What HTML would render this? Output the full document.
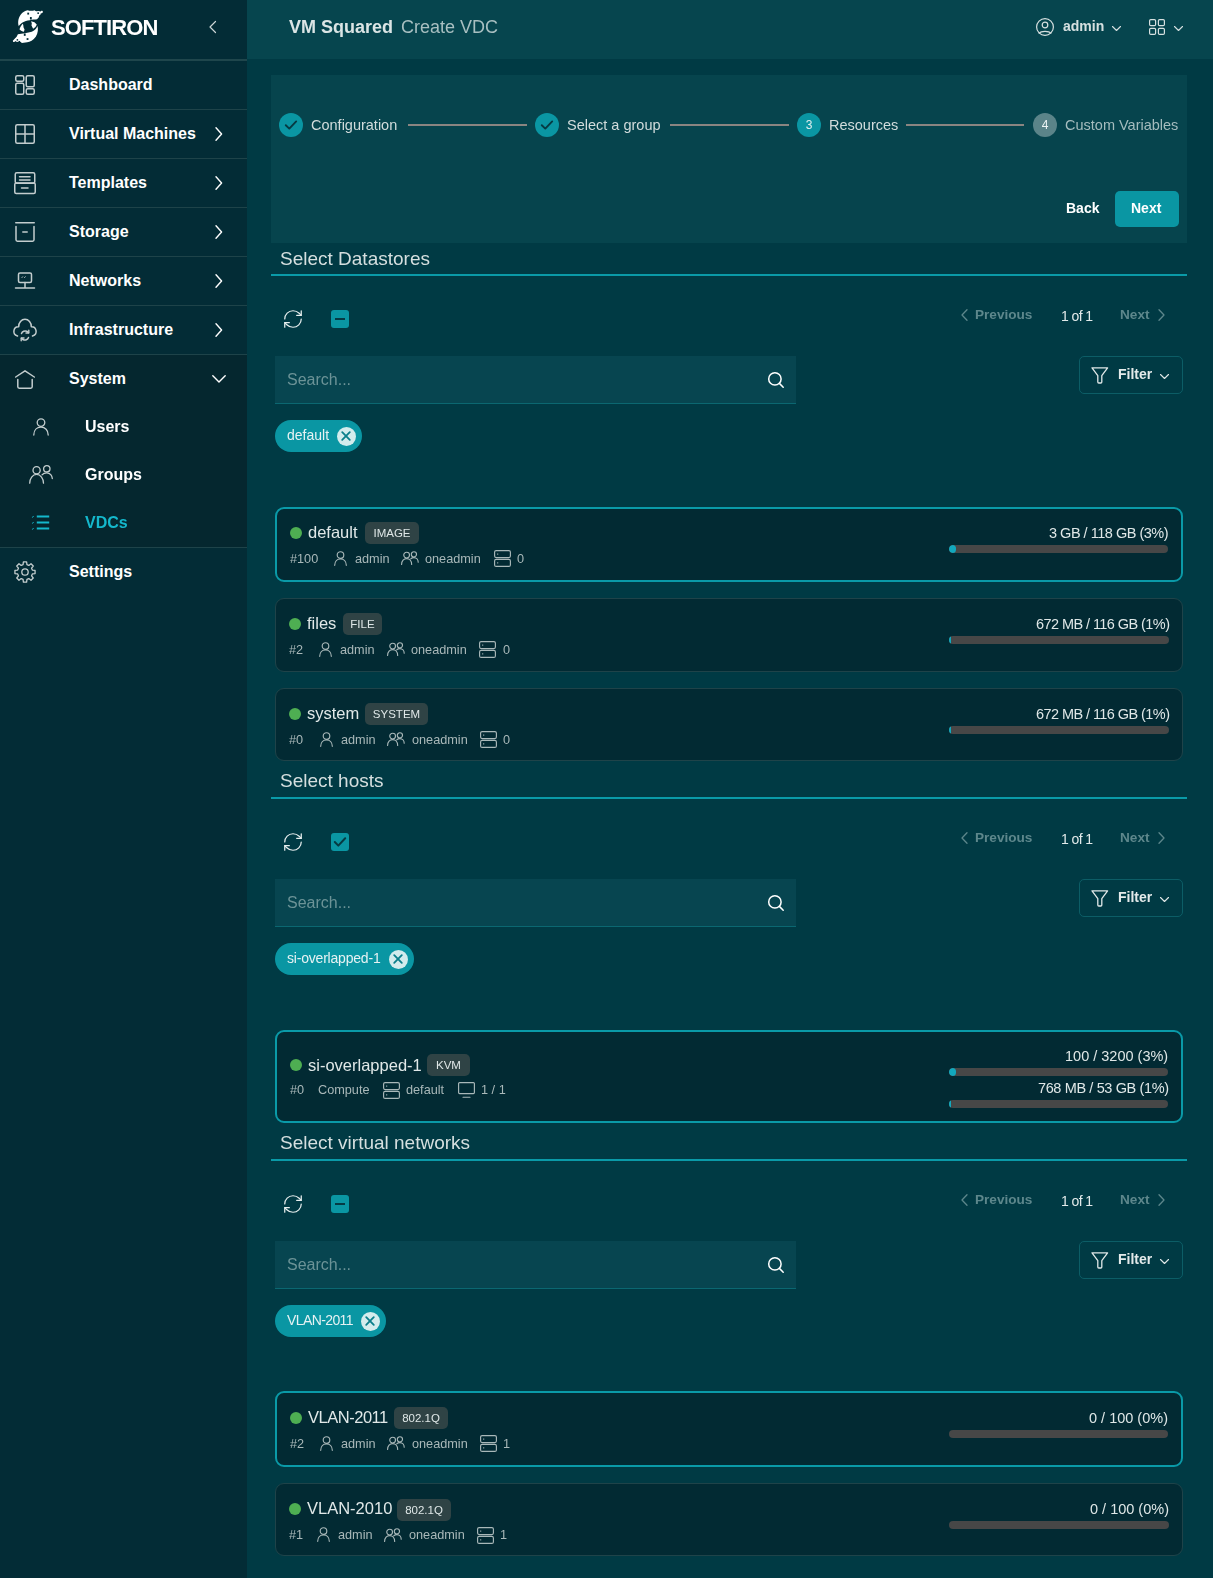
<!DOCTYPE html>
<html><head><meta charset="utf-8"><style>
*{box-sizing:border-box;margin:0;padding:0}
html,body{width:1213px;height:1578px;overflow:hidden;background:#003a44;font-family:"Liberation Sans",sans-serif;}
.a{position:absolute}
svg{position:absolute;overflow:visible}
#side{position:absolute;left:0;top:0;width:247px;height:1578px;background:#032c36}
.mi{position:absolute;left:0;width:247px;height:49px;border-bottom:1px solid #1e4349;color:#fff;font-weight:700;font-size:16px}
.mi .t{position:absolute;left:69px;top:15px;line-height:18px;white-space:nowrap}
#grp{position:absolute;left:0;top:355px;width:247px;height:193px;background:#05272f;border-bottom:1px solid #1e4349}
#hdr{position:absolute;left:247px;top:0;width:966px;height:59px;background:#06454e}
#main{position:absolute;left:247px;top:59px;width:966px;height:1519px;background:#003a44}
.txt{position:absolute;white-space:nowrap;will-change:transform}
</style></head><body>
<div id="side">
<div class="a" style="left:0;top:59px;width:247px;height:2px;background:#1f464c"></div>
<svg style="left:8px;top:5px" width="40" height="43" viewBox="0 0 1213 1304" fill="none" stroke="#c3cdce" stroke-width="1.5" stroke-linecap="round" stroke-linejoin="round"><g fill="#fff" stroke="none">
<path d="M600 160 L640 172 L760 176 L800 160 L850 192 L1040 178 L1065 215 L990 290 L950 320 L930 380 L880 432 C760 442 560 462 440 532 C380 572 342 610 330 645 C296 560 298 420 378 300 C440 220 520 176 600 160 Z"/>
<path d="M892 640 C922 720 912 860 842 960 C772 1060 662 1122 582 1132 L420 1150 L380 1112 L160 1122 L145 1082 L262 962 L300 890 C420 870 600 852 720 812 C800 782 862 722 892 640 Z"/>
<path d="M440 572 C400 622 352 700 350 742 C382 782 440 802 482 812 L502 742 L472 682 L462 602 Z"/>
<path d="M700 492 L722 562 L712 622 L762 722 C802 702 852 652 872 592 L802 522 Z"/>
</g>
<g fill="#032c36" stroke="none"><rect x="585" y="232" width="55" height="58"/><rect x="665" y="365" width="55" height="75"/><rect x="890" y="225" width="50" height="45"/><rect x="480" y="865" width="55" height="70"/><rect x="565" y="1005" width="55" height="55"/><rect x="262" y="1035" width="45" height="45"/><rect x="955" y="150" width="45" height="45"/><rect x="990" y="255" width="40" height="40"/><rect x="205" y="1100" width="45" height="40"/><rect x="320" y="1090" width="45" height="40"/></g></svg>
<div class="txt" style="left:50.5px;top:14.7px;font-size:22px;line-height:26px;color:#ffffff;font-weight:700;letter-spacing:-0.9px">SOFTIRON</div>
<svg style="left:209px;top:21px" width="8" height="12" viewBox="0 0 8 12" fill="none" stroke="#cdd6d6" stroke-width="1.2" stroke-linecap="round" stroke-linejoin="round"><path d="M6.5 0.5 L1 6 L6.5 11.5"/></svg>
<div class="mi" style="top:61px"><div class="t">Dashboard</div></div>
<div class="mi" style="top:110px"><div class="t">Virtual Machines</div></div>
<svg style="left:215px;top:127px" width="8" height="14" viewBox="0 0 8 14" fill="none" stroke="#ffffff" stroke-width="1.4" stroke-linecap="round" stroke-linejoin="round"><path d="M1 0.8 L6.6 7 L1 13.2"/></svg>
<div class="mi" style="top:159px"><div class="t">Templates</div></div>
<svg style="left:215px;top:176px" width="8" height="14" viewBox="0 0 8 14" fill="none" stroke="#ffffff" stroke-width="1.4" stroke-linecap="round" stroke-linejoin="round"><path d="M1 0.8 L6.6 7 L1 13.2"/></svg>
<div class="mi" style="top:208px"><div class="t">Storage</div></div>
<svg style="left:215px;top:225px" width="8" height="14" viewBox="0 0 8 14" fill="none" stroke="#ffffff" stroke-width="1.4" stroke-linecap="round" stroke-linejoin="round"><path d="M1 0.8 L6.6 7 L1 13.2"/></svg>
<div class="mi" style="top:257px"><div class="t">Networks</div></div>
<svg style="left:215px;top:274px" width="8" height="14" viewBox="0 0 8 14" fill="none" stroke="#ffffff" stroke-width="1.4" stroke-linecap="round" stroke-linejoin="round"><path d="M1 0.8 L6.6 7 L1 13.2"/></svg>
<div class="mi" style="top:306px"><div class="t">Infrastructure</div></div>
<svg style="left:215px;top:323px" width="8" height="14" viewBox="0 0 8 14" fill="none" stroke="#ffffff" stroke-width="1.4" stroke-linecap="round" stroke-linejoin="round"><path d="M1 0.8 L6.6 7 L1 13.2"/></svg>
<svg style="left:15px;top:75px" width="20" height="20" viewBox="0 0 20 20" fill="none" stroke="#c3cdce" stroke-width="1.5" stroke-linecap="round" stroke-linejoin="round"><rect x="0.75" y="0.75" width="8" height="5.5" rx="1.5"/><rect x="0.75" y="8.25" width="8" height="11" rx="1.5"/><rect x="11.25" y="0.75" width="8" height="11" rx="1.5"/><rect x="11.25" y="13.75" width="8" height="5.5" rx="1.5"/></svg>
<svg style="left:15px;top:124px" width="20" height="20" viewBox="0 0 20 20" fill="none" stroke="#c3cdce" stroke-width="1.5" stroke-linecap="round" stroke-linejoin="round"><rect x="0.75" y="0.75" width="18.5" height="18.5" rx="1.5"/><path d="M10 0.75 V19.25 M0.75 10 H19.25"/></svg>
<svg style="left:14px;top:172px" width="22" height="22" viewBox="0 0 22 22" fill="none" stroke="#c3cdce" stroke-width="1.5" stroke-linecap="round" stroke-linejoin="round"><rect x="1.25" y="0.75" width="19.5" height="10.5" rx="1.5"/><rect x="0.75" y="11" width="20.5" height="10.5" rx="1.5"/><path d="M5.5 4.8 H16 M5.5 8 H16 M7.5 16 H14"/></svg>
<svg style="left:15px;top:222px" width="20" height="20" viewBox="0 0 20 20" fill="none" stroke="#c3cdce" stroke-width="1.5" stroke-linecap="round" stroke-linejoin="round"><path d="M0.75 0.75 H19.25 M1 4.5 V17.8 Q1 19.2 2.4 19.2 H17.6 Q19 19.2 19 17.8 V4.5 M7.8 10 H12.2"/></svg>
<svg style="left:15px;top:272px" width="20" height="17" viewBox="0 0 20 17" fill="none" stroke="#c3cdce" stroke-width="1.5" stroke-linecap="round" stroke-linejoin="round"><rect x="3.5" y="1" width="13" height="9.5" rx="1.5"/><path d="M10 10.5 V15.5 M0.5 16 H19.5"/><path d="M7 5.5 L7.6 4.8 M9.6 5.5 L10.2 4.8" stroke-width="1"/></svg>
<svg style="left:13px;top:318px" width="24" height="24" viewBox="0 0 24 24" fill="none" stroke="#c3cdce" stroke-width="1.5" stroke-linecap="round" stroke-linejoin="round"><path d="M4.5 18 C1.5 17 0.5 14.5 1 12.3 C1.5 10 3.5 8.5 5.7 8.7 C5.5 4.5 8.5 1.3 12 1.3 C15.5 1.3 18.5 4.5 18.3 8.7 C20.5 8.5 22.5 10 23 12.3 C23.5 14.5 22.5 17 19.5 18"/><path d="M8.5 15.5 C9.3 13.3 11.7 12.4 13.7 13.2 L15.5 14.6 M15.5 19.5 C14.7 21.7 12.3 22.6 10.3 21.8 L8.5 20.4" stroke-width="1.5"/><path d="M15.8 12.2 V15 H13" stroke-width="1.4"/><path d="M8.2 22.8 V20 H11" stroke-width="1.4"/></svg>
<div id="grp"></div>
<div class="mi" style="top:355px;border-bottom:none"><div class="t">System</div></div>
<svg style="left:212px;top:375px" width="14" height="8" viewBox="0 0 14 8" fill="none" stroke="#ffffff" stroke-width="1.4" stroke-linecap="round" stroke-linejoin="round"><path d="M0.8 0.8 L7 7 L13.2 0.8"/></svg>
<svg style="left:15px;top:370px" width="20" height="19" viewBox="0 0 20 19" fill="none" stroke="#c3cdce" stroke-width="1.5" stroke-linecap="round" stroke-linejoin="round"><path d="M0.7 7 L10 0.8 L19.3 7"/><path d="M2.8 9.5 V16.8 Q2.8 18.2 4.2 18.2 H15.8 Q17.2 18.2 17.2 16.8 V9.5"/></svg>
<div class="txt" style="left:85px;top:418px;font-size:16px;line-height:18px;color:#fff;font-weight:700;">Users</div>
<div class="txt" style="left:85px;top:466px;font-size:16px;line-height:18px;color:#fff;font-weight:700;">Groups</div>
<div class="txt" style="left:85px;top:514px;font-size:16px;line-height:18px;color:#14b8cc;font-weight:700;">VDCs</div>
<svg style="left:33px;top:418px" width="16" height="18" viewBox="0 0 16 18" fill="none" stroke="#c3cdce" stroke-width="1.3" stroke-linecap="round" stroke-linejoin="round"><circle cx="8" cy="4.6" r="3.8"/><path d="M0.8 17 C0.8 12 4 9.2 8 9.2 C12 9.2 15.2 12 15.2 17"/></svg>
<svg style="left:29px;top:464px" width="24" height="20" viewBox="0 0 24 20" fill="none" stroke="#c3cdce" stroke-width="1.3" stroke-linecap="round" stroke-linejoin="round"><circle cx="7.6" cy="6.2" r="3.6"/><path d="M0.7 19.2 C0.7 14.5 3.6 10.4 7.6 10.4 C11.6 10.4 14.5 14.5 14.5 19.2"/><circle cx="17.8" cy="4.8" r="3.2"/><path d="M13 10.8 C14 9.6 15.8 8.8 17.8 8.8 C21 8.8 23.3 11.8 23.3 14.6"/></svg>
<svg style="left:32px;top:515px" width="18" height="16" viewBox="0 0 18 16" fill="none" stroke="#14b8cc" stroke-width="1.5" stroke-linecap="round" stroke-linejoin="round"><path d="M4.8 1.5 H17.2 M4.8 7.5 H17.2 M4.8 13.5 H17.2" stroke-width="2.2" stroke-linecap="butt"/><path d="M0.6 2.3 L1.3 1.3 M0.6 8.3 L1.3 7.3 M0.6 14.3 L1.3 13.3" stroke-width="1"/></svg>
<div class="mi" style="top:548px;border-bottom:none"><div class="t">Settings</div></div>
<svg style="left:14px;top:561px" width="22" height="22" viewBox="0 0 22 22" fill="none" stroke="#c3cdce" stroke-width="1.3" stroke-linecap="round" stroke-linejoin="round"><path d="M18.35 9.05 L21.07 9.40 L21.07 12.60 L18.35 12.95 L17.57 14.82 L19.25 17.00 L17.00 19.25 L14.82 17.57 L12.95 18.35 L12.60 21.07 L9.40 21.07 L9.05 18.35 L7.18 17.57 L5.00 19.25 L2.75 17.00 L4.43 14.82 L3.65 12.95 L0.93 12.60 L0.93 9.40 L3.65 9.05 L4.43 7.18 L2.75 5.00 L5.00 2.75 L7.18 4.43 L9.05 3.65 L9.40 0.93 L12.60 0.93 L12.95 3.65 L14.82 4.43 L17.00 2.75 L19.25 5.00 L17.57 7.18 Z"/><circle cx="11" cy="11" r="3.2"/></svg>
</div>
<div id="hdr">
<div class="txt" style="left:42px;top:16px;font-size:18px;line-height:22px;color:#dbe5e5;font-weight:700;">VM Squared</div>
<div class="txt" style="left:154px;top:16px;font-size:18px;line-height:22px;color:#a8bfc1;font-weight:400;">Create VDC</div>
<svg style="left:789px;top:18px" width="18" height="18" viewBox="0 0 18 18" fill="none" stroke="#d6e0e0" stroke-width="1.2" stroke-linecap="round" stroke-linejoin="round"><circle cx="9" cy="9" r="8.4"/><circle cx="9" cy="7" r="2.8"/><path d="M3.2 15.2 C5 12.8 13 12.8 14.8 15.2"/></svg>
<div class="txt" style="left:816px;top:17px;font-size:14px;line-height:18px;color:#d6e0e0;font-weight:700;">admin</div>
<svg style="left:865px;top:26px" width="9" height="5" viewBox="0 0 9 5" fill="none" stroke="#d6e0e0" stroke-width="1.1" stroke-linecap="round" stroke-linejoin="round"><path d="M0.5 0.5 L4.5 4.5 L8.5 0.5"/></svg>
<svg style="left:902px;top:19px" width="16" height="16" viewBox="0 0 16 16" fill="none" stroke="#d6e0e0" stroke-width="1.2" stroke-linecap="round" stroke-linejoin="round"><rect x="0.6" y="0.6" width="6" height="6" rx="1.2"/><rect x="9.4" y="0.6" width="6" height="6" rx="1.2"/><rect x="0.6" y="9.4" width="6" height="6" rx="1.2"/><rect x="9.4" y="9.4" width="6" height="6" rx="1.2"/></svg>
<svg style="left:927px;top:26px" width="9" height="5" viewBox="0 0 9 5" fill="none" stroke="#d6e0e0" stroke-width="1.1" stroke-linecap="round" stroke-linejoin="round"><path d="M0.5 0.5 L4.5 4.5 L8.5 0.5"/></svg>
</div>
<div id="main"></div>
<div class="a" style="left:271px;top:75px;width:916px;height:168px;background:#06444d"></div>
<div class="a" style="left:279px;top:113px;width:24px;height:24px;border-radius:50%;background:#0a96a3"></div>
<svg style="left:285px;top:120px" width="12" height="10" viewBox="0 0 12 10" fill="none" stroke="#063a42" stroke-width="1.9" stroke-linecap="round" stroke-linejoin="round"><path d="M0.8 5.2 L4.3 8.6 L11.2 1.4"/></svg>
<div class="txt" style="left:311px;top:117.73px;font-size:14.5px;line-height:14.5px;color:#d2dcdc;font-weight:400;">Configuration</div>
<div class="a" style="left:408px;top:124px;width:119px;height:2px;background:#8a8581"></div>
<div class="a" style="left:535px;top:113px;width:24px;height:24px;border-radius:50%;background:#0a96a3"></div>
<svg style="left:541px;top:120px" width="12" height="10" viewBox="0 0 12 10" fill="none" stroke="#063a42" stroke-width="1.9" stroke-linecap="round" stroke-linejoin="round"><path d="M0.8 5.2 L4.3 8.6 L11.2 1.4"/></svg>
<div class="txt" style="left:567px;top:117.73px;font-size:14.5px;line-height:14.5px;color:#d2dcdc;font-weight:400;">Select a group</div>
<div class="a" style="left:670px;top:124px;width:119px;height:2px;background:#8a8581"></div>
<div class="a" style="left:797px;top:113px;width:24px;height:24px;border-radius:50%;background:#0a96a3"></div>
<div class="txt" style="left:797px;top:118px;width:24px;text-align:center;font-size:12px;line-height:14px;color:#dfeeee">3</div>
<div class="txt" style="left:829px;top:117.73px;font-size:14.5px;line-height:14.5px;color:#d2dcdc;font-weight:400;">Resources</div>
<div class="a" style="left:906px;top:124px;width:118px;height:2px;background:#8a8581"></div>
<div class="a" style="left:1033px;top:113px;width:24px;height:24px;border-radius:50%;background:#5b8489"></div>
<div class="txt" style="left:1033px;top:118px;width:24px;text-align:center;font-size:12px;line-height:14px;color:#eef5f5">4</div>
<div class="txt" style="left:1065px;top:117.73px;font-size:14.5px;line-height:14.5px;color:#a5bcbe;font-weight:400;">Custom Variables</div>
<div class="txt" style="left:1066px;top:201.15px;font-size:14px;line-height:14px;color:#ffffff;font-weight:700;">Back</div>
<div class="a" style="left:1115px;top:191px;width:64px;height:36px;border-radius:5px;background:#0a96a3"></div>
<div class="txt" style="left:1131px;top:201.15px;font-size:14px;line-height:14px;color:#ffffff;font-weight:700;">Next</div>
<div class="txt" style="left:280px;top:249.12px;font-size:19px;line-height:19px;color:#d5dfdf;font-weight:400;">Select Datastores</div>
<div class="a" style="left:271px;top:274px;width:916px;height:2px;background:#0a9aa8"></div>
<svg style="left:282px;top:308px" width="22" height="22" viewBox="0 0 24 24" fill="none" stroke="#e6eeee" stroke-width="1.35" stroke-linecap="round" stroke-linejoin="round"><path d="M3 12a9 9 0 0 1 9-9 9.75 9.75 0 0 1 6.74 2.74L21 8"/><path d="M21 3v5h-5"/><path d="M21 12a9 9 0 0 1-9 9 9.75 9.75 0 0 1-6.74-2.74L3 16"/><path d="M8 16H3v5"/></svg>
<div class="a" style="left:331px;top:310px;width:18px;height:18px;border-radius:3px;background:#0a96a3"></div>
<div class="a" style="left:335px;top:318px;width:10px;height:2px;background:#053a44"></div>
<svg style="left:961px;top:309px" width="7" height="12" viewBox="0 0 7 12" fill="none" stroke="#5d878c" stroke-width="1.3" stroke-linecap="round" stroke-linejoin="round"><path d="M6 0.8 L1 6 L6 11.2"/></svg>
<div class="txt" style="left:975px;top:308.49px;font-size:13.6px;line-height:13.6px;color:#5d878c;font-weight:700;">Previous</div>
<div class="txt" style="left:1060.5px;top:308.65px;font-size:14px;line-height:14px;color:#e2eaea;font-weight:400;letter-spacing:-0.6px">1 of 1</div>
<div class="txt" style="left:1120px;top:308.49px;font-size:13.6px;line-height:13.6px;color:#5d878c;font-weight:700;">Next</div>
<svg style="left:1158px;top:309px" width="7" height="12" viewBox="0 0 7 12" fill="none" stroke="#5d878c" stroke-width="1.3" stroke-linecap="round" stroke-linejoin="round"><path d="M1 0.8 L6 6 L1 11.2"/></svg>
<div class="a" style="left:275px;top:356px;width:521px;height:48px;background:#074550;border-bottom:1px solid #0b6771"></div>
<div class="txt" style="left:287px;top:371.96px;font-size:16px;line-height:16px;color:#6c9397;font-weight:400;">Search...</div>
<svg style="left:768px;top:372px" width="17" height="17" viewBox="0 0 17 17" fill="none" stroke="#ffffff" stroke-width="1.5" stroke-linecap="round" stroke-linejoin="round"><circle cx="6.9" cy="6.9" r="6.2"/><path d="M11.4 11.4 L15.2 15.2"/></svg>
<div class="a" style="left:1079px;top:356px;width:104px;height:38px;border:1px solid #0c5d66;border-radius:5px"></div>
<svg style="left:1091px;top:367px" width="18" height="17" viewBox="0 0 18 17" fill="none" stroke="#e0e8e8" stroke-width="1.3" stroke-linecap="round" stroke-linejoin="round"><path d="M1 0.8 H16.6 L10.8 8.6 V15 Q10.8 16 9.8 16 H7.8 Q6.8 16 6.8 15 V8.6 Z"/></svg>
<div class="txt" style="left:1118px;top:366.65px;font-size:14px;line-height:14px;color:#e3eaea;font-weight:700;">Filter</div>
<svg style="left:1160px;top:374px" width="9" height="5" viewBox="0 0 9 5" fill="none" stroke="#e0e8e8" stroke-width="1.1" stroke-linecap="round" stroke-linejoin="round"><path d="M0.5 0.5 L4.5 4.5 L8.5 0.5"/></svg>
<div class="a" style="left:275px;top:420px;width:87px;height:32px;border-radius:16px;background:#0a96a3"></div>
<div class="txt" style="left:287px;top:428.15px;font-size:14px;line-height:14px;color:#e6f2f3;font-weight:400;letter-spacing:0px">default</div>
<div class="a" style="left:336.5px;top:426.5px;width:19px;height:19px;border-radius:50%;background:#d3eced"></div>
<svg style="left:341px;top:431px" width="10" height="10" viewBox="0 0 10 10" fill="none" stroke="#0a7f8b" stroke-width="1.8" stroke-linecap="round" stroke-linejoin="round"><path d="M1.2 1.2 L8.8 8.8 M8.8 1.2 L1.2 8.8"/></svg>
<div class="a" style="left:275px;top:507px;width:908px;height:75px;border:2px solid #0a9aa8;border-radius:9px;background:#022a33"></div>
<div class="a" style="left:290px;top:527px;width:12px;height:12px;border-radius:50%;background:#4eae52"></div>
<div class="txt" style="left:308px;top:524.03px;font-size:16.5px;line-height:16.5px;color:#e0e8e8;font-weight:400;letter-spacing:0px">default</div>
<div class="a" style="left:365px;top:522px;width:54px;height:22px;border-radius:5px;background:#2f4345"></div>
<div class="txt" style="left:365px;top:522px;width:54px;height:22px;text-align:center;font-size:11.5px;line-height:22px;color:#dfe7e7">IMAGE</div>
<div class="txt" style="left:290px;top:552.65px;font-size:12.7px;line-height:12.7px;color:#a9b8b9;font-weight:400;">#100</div>
<svg style="left:334px;top:550.9px" width="13" height="15" viewBox="0 0 13 15" fill="none" stroke="#a9b8b9" stroke-width="1.15" stroke-linecap="round" stroke-linejoin="round"><circle cx="6.5" cy="4" r="3.3"/><path d="M0.7 14.3 C0.7 10.2 3.3 7.9 6.5 7.9 C9.7 7.9 12.3 10.2 12.3 14.3"/></svg>
<div class="txt" style="left:354.5px;top:552.65px;font-size:12.7px;line-height:12.7px;color:#a9b8b9;font-weight:400;">admin</div>
<svg style="left:401px;top:551.1999999999999px" width="17.8" height="14" viewBox="0 0 19 15" fill="none" stroke="#a9b8b9" stroke-width="1.2" stroke-linecap="round" stroke-linejoin="round"><circle cx="6" cy="4.4" r="3.1"/><path d="M0.6 14.4 C0.6 10.6 3 8.2 6 8.2 C9 8.2 11.4 10.6 11.4 14.4"/><circle cx="13.8" cy="3.6" r="2.8"/><path d="M10.4 8.4 C11.2 7.6 12.4 7.1 13.8 7.1 C16.4 7.1 18.4 9.4 18.4 12"/></svg>
<div class="txt" style="left:425px;top:552.65px;font-size:12.7px;line-height:12.7px;color:#a9b8b9;font-weight:400;">oneadmin</div>
<svg style="left:494px;top:550.4px" width="17" height="17" viewBox="0 0 17 17" fill="none" stroke="#a9b8b9" stroke-width="1.15" stroke-linecap="round" stroke-linejoin="round"><rect x="0.6" y="0.6" width="15.8" height="7" rx="1.5"/><rect x="0.6" y="9.4" width="15.8" height="7" rx="1.5"/><path d="M3.4 4.1 H3.9 M3.4 12.9 H3.9" stroke-width="1"/></svg>
<div class="txt" style="left:517px;top:552.65px;font-size:12.7px;line-height:12.7px;color:#a9b8b9;font-weight:400;">0</div>
<div class="txt" style="right:44.5px;top:525.73px;font-size:14.5px;line-height:14.5px;color:#dfe7e7;font-weight:400;text-align:right;letter-spacing:-0.49px">3 GB / 118 GB (3%)</div>
<div class="a" style="left:949px;top:545px;width:219px;height:8px;border-radius:4px;background:#474747;overflow:hidden"><div style="width:6.57px;height:8px;border-radius:4px;background:#12a8bd"></div></div>
<div class="a" style="left:275px;top:598px;width:908px;height:74px;border:1px solid #1f4349;border-radius:9px;background:#022a33"></div>
<div class="a" style="left:289px;top:617.5px;width:12px;height:12px;border-radius:50%;background:#4eae52"></div>
<div class="txt" style="left:307px;top:614.53px;font-size:16.5px;line-height:16.5px;color:#e0e8e8;font-weight:400;letter-spacing:0px">files</div>
<div class="a" style="left:343px;top:613px;width:39px;height:22px;border-radius:5px;background:#2f4345"></div>
<div class="txt" style="left:343px;top:613px;width:39px;height:22px;text-align:center;font-size:11.5px;line-height:22px;color:#dfe7e7">FILE</div>
<div class="txt" style="left:289px;top:643.65px;font-size:12.7px;line-height:12.7px;color:#a9b8b9;font-weight:400;">#2</div>
<svg style="left:318.5px;top:641.9px" width="13" height="15" viewBox="0 0 13 15" fill="none" stroke="#a9b8b9" stroke-width="1.15" stroke-linecap="round" stroke-linejoin="round"><circle cx="6.5" cy="4" r="3.3"/><path d="M0.7 14.3 C0.7 10.2 3.3 7.9 6.5 7.9 C9.7 7.9 12.3 10.2 12.3 14.3"/></svg>
<div class="txt" style="left:340px;top:643.65px;font-size:12.7px;line-height:12.7px;color:#a9b8b9;font-weight:400;">admin</div>
<svg style="left:386.5px;top:642.1999999999999px" width="17.8" height="14" viewBox="0 0 19 15" fill="none" stroke="#a9b8b9" stroke-width="1.2" stroke-linecap="round" stroke-linejoin="round"><circle cx="6" cy="4.4" r="3.1"/><path d="M0.6 14.4 C0.6 10.6 3 8.2 6 8.2 C9 8.2 11.4 10.6 11.4 14.4"/><circle cx="13.8" cy="3.6" r="2.8"/><path d="M10.4 8.4 C11.2 7.6 12.4 7.1 13.8 7.1 C16.4 7.1 18.4 9.4 18.4 12"/></svg>
<div class="txt" style="left:410.5px;top:643.65px;font-size:12.7px;line-height:12.7px;color:#a9b8b9;font-weight:400;">oneadmin</div>
<svg style="left:479px;top:641.4px" width="17" height="17" viewBox="0 0 17 17" fill="none" stroke="#a9b8b9" stroke-width="1.15" stroke-linecap="round" stroke-linejoin="round"><rect x="0.6" y="0.6" width="15.8" height="7" rx="1.5"/><rect x="0.6" y="9.4" width="15.8" height="7" rx="1.5"/><path d="M3.4 4.1 H3.9 M3.4 12.9 H3.9" stroke-width="1"/></svg>
<div class="txt" style="left:502.5px;top:643.65px;font-size:12.7px;line-height:12.7px;color:#a9b8b9;font-weight:400;">0</div>
<div class="txt" style="right:43.5px;top:616.73px;font-size:14.5px;line-height:14.5px;color:#dfe7e7;font-weight:400;text-align:right;letter-spacing:-0.57px">672 MB / 116 GB (1%)</div>
<div class="a" style="left:949px;top:636px;width:220px;height:8px;border-radius:4px;background:#474747;overflow:hidden"><div style="width:2.20px;height:8px;border-radius:4px;background:#12a8bd"></div></div>
<div class="a" style="left:275px;top:688px;width:908px;height:73px;border:1px solid #1f4349;border-radius:9px;background:#022a33"></div>
<div class="a" style="left:289px;top:707.5px;width:12px;height:12px;border-radius:50%;background:#4eae52"></div>
<div class="txt" style="left:307px;top:704.53px;font-size:16.5px;line-height:16.5px;color:#e0e8e8;font-weight:400;letter-spacing:0px">system</div>
<div class="a" style="left:365px;top:703px;width:63px;height:22px;border-radius:5px;background:#2f4345"></div>
<div class="txt" style="left:365px;top:703px;width:63px;height:22px;text-align:center;font-size:11.5px;line-height:22px;color:#dfe7e7">SYSTEM</div>
<div class="txt" style="left:289px;top:733.65px;font-size:12.7px;line-height:12.7px;color:#a9b8b9;font-weight:400;">#0</div>
<svg style="left:319.5px;top:731.9px" width="13" height="15" viewBox="0 0 13 15" fill="none" stroke="#a9b8b9" stroke-width="1.15" stroke-linecap="round" stroke-linejoin="round"><circle cx="6.5" cy="4" r="3.3"/><path d="M0.7 14.3 C0.7 10.2 3.3 7.9 6.5 7.9 C9.7 7.9 12.3 10.2 12.3 14.3"/></svg>
<div class="txt" style="left:340.5px;top:733.65px;font-size:12.7px;line-height:12.7px;color:#a9b8b9;font-weight:400;">admin</div>
<svg style="left:387px;top:732.1999999999999px" width="17.8" height="14" viewBox="0 0 19 15" fill="none" stroke="#a9b8b9" stroke-width="1.2" stroke-linecap="round" stroke-linejoin="round"><circle cx="6" cy="4.4" r="3.1"/><path d="M0.6 14.4 C0.6 10.6 3 8.2 6 8.2 C9 8.2 11.4 10.6 11.4 14.4"/><circle cx="13.8" cy="3.6" r="2.8"/><path d="M10.4 8.4 C11.2 7.6 12.4 7.1 13.8 7.1 C16.4 7.1 18.4 9.4 18.4 12"/></svg>
<div class="txt" style="left:411.5px;top:733.65px;font-size:12.7px;line-height:12.7px;color:#a9b8b9;font-weight:400;">oneadmin</div>
<svg style="left:480px;top:731.4px" width="17" height="17" viewBox="0 0 17 17" fill="none" stroke="#a9b8b9" stroke-width="1.15" stroke-linecap="round" stroke-linejoin="round"><rect x="0.6" y="0.6" width="15.8" height="7" rx="1.5"/><rect x="0.6" y="9.4" width="15.8" height="7" rx="1.5"/><path d="M3.4 4.1 H3.9 M3.4 12.9 H3.9" stroke-width="1"/></svg>
<div class="txt" style="left:503px;top:733.65px;font-size:12.7px;line-height:12.7px;color:#a9b8b9;font-weight:400;">0</div>
<div class="txt" style="right:43.5px;top:706.73px;font-size:14.5px;line-height:14.5px;color:#dfe7e7;font-weight:400;text-align:right;letter-spacing:-0.57px">672 MB / 116 GB (1%)</div>
<div class="a" style="left:949px;top:726px;width:220px;height:8px;border-radius:4px;background:#474747;overflow:hidden"><div style="width:2.20px;height:8px;border-radius:4px;background:#12a8bd"></div></div>
<div class="txt" style="left:280px;top:770.92px;font-size:19px;line-height:19px;color:#d5dfdf;font-weight:400;">Select hosts</div>
<div class="a" style="left:271px;top:797px;width:916px;height:2px;background:#0a9aa8"></div>
<svg style="left:282px;top:831px" width="22" height="22" viewBox="0 0 24 24" fill="none" stroke="#e6eeee" stroke-width="1.35" stroke-linecap="round" stroke-linejoin="round"><path d="M3 12a9 9 0 0 1 9-9 9.75 9.75 0 0 1 6.74 2.74L21 8"/><path d="M21 3v5h-5"/><path d="M21 12a9 9 0 0 1-9 9 9.75 9.75 0 0 1-6.74-2.74L3 16"/><path d="M8 16H3v5"/></svg>
<div class="a" style="left:331px;top:833px;width:18px;height:18px;border-radius:3px;background:#0a96a3"></div>
<svg style="left:334px;top:837px" width="12" height="10" viewBox="0 0 12 10" fill="none" stroke="#063a42" stroke-width="2" stroke-linecap="round" stroke-linejoin="round"><path d="M0.8 5 L4.3 8.6 L11.2 1.2"/></svg>
<svg style="left:961px;top:832px" width="7" height="12" viewBox="0 0 7 12" fill="none" stroke="#5d878c" stroke-width="1.3" stroke-linecap="round" stroke-linejoin="round"><path d="M6 0.8 L1 6 L6 11.2"/></svg>
<div class="txt" style="left:975px;top:831.49px;font-size:13.6px;line-height:13.6px;color:#5d878c;font-weight:700;">Previous</div>
<div class="txt" style="left:1060.5px;top:831.65px;font-size:14px;line-height:14px;color:#e2eaea;font-weight:400;letter-spacing:-0.6px">1 of 1</div>
<div class="txt" style="left:1120px;top:831.49px;font-size:13.6px;line-height:13.6px;color:#5d878c;font-weight:700;">Next</div>
<svg style="left:1158px;top:832px" width="7" height="12" viewBox="0 0 7 12" fill="none" stroke="#5d878c" stroke-width="1.3" stroke-linecap="round" stroke-linejoin="round"><path d="M1 0.8 L6 6 L1 11.2"/></svg>
<div class="a" style="left:275px;top:879px;width:521px;height:48px;background:#074550;border-bottom:1px solid #0b6771"></div>
<div class="txt" style="left:287px;top:894.96px;font-size:16px;line-height:16px;color:#6c9397;font-weight:400;">Search...</div>
<svg style="left:768px;top:895px" width="17" height="17" viewBox="0 0 17 17" fill="none" stroke="#ffffff" stroke-width="1.5" stroke-linecap="round" stroke-linejoin="round"><circle cx="6.9" cy="6.9" r="6.2"/><path d="M11.4 11.4 L15.2 15.2"/></svg>
<div class="a" style="left:1079px;top:879px;width:104px;height:38px;border:1px solid #0c5d66;border-radius:5px"></div>
<svg style="left:1091px;top:890px" width="18" height="17" viewBox="0 0 18 17" fill="none" stroke="#e0e8e8" stroke-width="1.3" stroke-linecap="round" stroke-linejoin="round"><path d="M1 0.8 H16.6 L10.8 8.6 V15 Q10.8 16 9.8 16 H7.8 Q6.8 16 6.8 15 V8.6 Z"/></svg>
<div class="txt" style="left:1118px;top:889.65px;font-size:14px;line-height:14px;color:#e3eaea;font-weight:700;">Filter</div>
<svg style="left:1160px;top:897px" width="9" height="5" viewBox="0 0 9 5" fill="none" stroke="#e0e8e8" stroke-width="1.1" stroke-linecap="round" stroke-linejoin="round"><path d="M0.5 0.5 L4.5 4.5 L8.5 0.5"/></svg>
<div class="a" style="left:275px;top:943px;width:139px;height:32px;border-radius:16px;background:#0a96a3"></div>
<div class="txt" style="left:287px;top:951.15px;font-size:14px;line-height:14px;color:#e6f2f3;font-weight:400;letter-spacing:-0.2px">si-overlapped-1</div>
<div class="a" style="left:388.5px;top:949.5px;width:19px;height:19px;border-radius:50%;background:#d3eced"></div>
<svg style="left:393px;top:954px" width="10" height="10" viewBox="0 0 10 10" fill="none" stroke="#0a7f8b" stroke-width="1.8" stroke-linecap="round" stroke-linejoin="round"><path d="M1.2 1.2 L8.8 8.8 M8.8 1.2 L1.2 8.8"/></svg>
<div class="a" style="left:275px;top:1030px;width:908px;height:93px;border:2px solid #0a9aa8;border-radius:9px;background:#022a33"></div>
<div class="a" style="left:290px;top:1059px;width:12px;height:12px;border-radius:50%;background:#4eae52"></div>
<div class="txt" style="left:308px;top:1056.53px;font-size:16.5px;line-height:16.5px;color:#e0e8e8;font-weight:400;">si-overlapped-1</div>
<div class="a" style="left:427px;top:1054px;width:43px;height:22px;border-radius:5px;background:#2f4345"></div>
<div class="txt" style="left:427px;top:1054px;width:43px;height:22px;text-align:center;font-size:11.5px;line-height:22px;color:#dfe7e7">KVM</div>
<div class="txt" style="left:290px;top:1083.75px;font-size:12.7px;line-height:12.7px;color:#a9b8b9;font-weight:400;">#0</div>
<div class="txt" style="left:318px;top:1083.75px;font-size:12.7px;line-height:12.7px;color:#a9b8b9;font-weight:400;">Compute</div>
<svg style="left:382.5px;top:1081.5px" width="17" height="17" viewBox="0 0 17 17" fill="none" stroke="#a9b8b9" stroke-width="1.15" stroke-linecap="round" stroke-linejoin="round"><rect x="0.6" y="0.6" width="15.8" height="7" rx="1.5"/><rect x="0.6" y="9.4" width="15.8" height="7" rx="1.5"/><path d="M3.4 4.1 H3.9 M3.4 12.9 H3.9" stroke-width="1"/></svg>
<div class="txt" style="left:406px;top:1083.75px;font-size:12.7px;line-height:12.7px;color:#a9b8b9;font-weight:400;">default</div>
<svg style="left:457.5px;top:1082px" width="17" height="16" viewBox="0 0 17 16" fill="none" stroke="#a9b8b9" stroke-width="1.15" stroke-linecap="round" stroke-linejoin="round"><rect x="0.6" y="0.6" width="15.8" height="11" rx="1"/><path d="M5 15.2 H12"/></svg>
<div class="txt" style="left:480.5px;top:1083.75px;font-size:12.7px;line-height:12.7px;color:#a9b8b9;font-weight:400;">1 / 1</div>
<div class="txt" style="right:45px;top:1049.03px;font-size:14.5px;line-height:14.5px;color:#dfe7e7;font-weight:400;text-align:right;letter-spacing:0px">100 / 3200 (3%)</div>
<div class="a" style="left:949px;top:1068px;width:219px;height:8px;border-radius:4px;background:#474747;overflow:hidden"><div style="width:6.57px;height:8px;border-radius:4px;background:#12a8bd"></div></div>
<div class="txt" style="right:44.59999999999991px;top:1080.73px;font-size:14.5px;line-height:14.5px;color:#dfe7e7;font-weight:400;text-align:right;letter-spacing:-0.38px">768 MB / 53 GB (1%)</div>
<div class="a" style="left:949px;top:1100px;width:219px;height:8px;border-radius:4px;background:#474747;overflow:hidden"><div style="width:2.19px;height:8px;border-radius:4px;background:#12a8bd"></div></div>
<div class="txt" style="left:280px;top:1132.92px;font-size:19px;line-height:19px;color:#d5dfdf;font-weight:400;">Select virtual networks</div>
<div class="a" style="left:271px;top:1159px;width:916px;height:2px;background:#0a9aa8"></div>
<svg style="left:282px;top:1193px" width="22" height="22" viewBox="0 0 24 24" fill="none" stroke="#e6eeee" stroke-width="1.35" stroke-linecap="round" stroke-linejoin="round"><path d="M3 12a9 9 0 0 1 9-9 9.75 9.75 0 0 1 6.74 2.74L21 8"/><path d="M21 3v5h-5"/><path d="M21 12a9 9 0 0 1-9 9 9.75 9.75 0 0 1-6.74-2.74L3 16"/><path d="M8 16H3v5"/></svg>
<div class="a" style="left:331px;top:1195px;width:18px;height:18px;border-radius:3px;background:#0a96a3"></div>
<div class="a" style="left:335px;top:1203px;width:10px;height:2px;background:#053a44"></div>
<svg style="left:961px;top:1194px" width="7" height="12" viewBox="0 0 7 12" fill="none" stroke="#5d878c" stroke-width="1.3" stroke-linecap="round" stroke-linejoin="round"><path d="M6 0.8 L1 6 L6 11.2"/></svg>
<div class="txt" style="left:975px;top:1193.49px;font-size:13.6px;line-height:13.6px;color:#5d878c;font-weight:700;">Previous</div>
<div class="txt" style="left:1060.5px;top:1193.65px;font-size:14px;line-height:14px;color:#e2eaea;font-weight:400;letter-spacing:-0.6px">1 of 1</div>
<div class="txt" style="left:1120px;top:1193.49px;font-size:13.6px;line-height:13.6px;color:#5d878c;font-weight:700;">Next</div>
<svg style="left:1158px;top:1194px" width="7" height="12" viewBox="0 0 7 12" fill="none" stroke="#5d878c" stroke-width="1.3" stroke-linecap="round" stroke-linejoin="round"><path d="M1 0.8 L6 6 L1 11.2"/></svg>
<div class="a" style="left:275px;top:1241px;width:521px;height:48px;background:#074550;border-bottom:1px solid #0b6771"></div>
<div class="txt" style="left:287px;top:1256.96px;font-size:16px;line-height:16px;color:#6c9397;font-weight:400;">Search...</div>
<svg style="left:768px;top:1257px" width="17" height="17" viewBox="0 0 17 17" fill="none" stroke="#ffffff" stroke-width="1.5" stroke-linecap="round" stroke-linejoin="round"><circle cx="6.9" cy="6.9" r="6.2"/><path d="M11.4 11.4 L15.2 15.2"/></svg>
<div class="a" style="left:1079px;top:1241px;width:104px;height:38px;border:1px solid #0c5d66;border-radius:5px"></div>
<svg style="left:1091px;top:1252px" width="18" height="17" viewBox="0 0 18 17" fill="none" stroke="#e0e8e8" stroke-width="1.3" stroke-linecap="round" stroke-linejoin="round"><path d="M1 0.8 H16.6 L10.8 8.6 V15 Q10.8 16 9.8 16 H7.8 Q6.8 16 6.8 15 V8.6 Z"/></svg>
<div class="txt" style="left:1118px;top:1251.65px;font-size:14px;line-height:14px;color:#e3eaea;font-weight:700;">Filter</div>
<svg style="left:1160px;top:1259px" width="9" height="5" viewBox="0 0 9 5" fill="none" stroke="#e0e8e8" stroke-width="1.1" stroke-linecap="round" stroke-linejoin="round"><path d="M0.5 0.5 L4.5 4.5 L8.5 0.5"/></svg>
<div class="a" style="left:275px;top:1305px;width:111px;height:32px;border-radius:16px;background:#0a96a3"></div>
<div class="txt" style="left:287px;top:1313.15px;font-size:14px;line-height:14px;color:#e6f2f3;font-weight:400;letter-spacing:-0.6px">VLAN-2011</div>
<div class="a" style="left:360.5px;top:1311.5px;width:19px;height:19px;border-radius:50%;background:#d3eced"></div>
<svg style="left:365px;top:1316px" width="10" height="10" viewBox="0 0 10 10" fill="none" stroke="#0a7f8b" stroke-width="1.8" stroke-linecap="round" stroke-linejoin="round"><path d="M1.2 1.2 L8.8 8.8 M8.8 1.2 L1.2 8.8"/></svg>
<div class="a" style="left:275px;top:1391px;width:908px;height:76px;border:2px solid #0a9aa8;border-radius:9px;background:#022a33"></div>
<div class="a" style="left:290px;top:1412px;width:12px;height:12px;border-radius:50%;background:#4eae52"></div>
<div class="txt" style="left:308px;top:1409.03px;font-size:16.5px;line-height:16.5px;color:#e0e8e8;font-weight:400;letter-spacing:-0.48px">VLAN-2011</div>
<div class="a" style="left:394px;top:1407px;width:54px;height:22px;border-radius:5px;background:#2f4345"></div>
<div class="txt" style="left:394px;top:1407px;width:54px;height:22px;text-align:center;font-size:11.5px;line-height:22px;color:#dfe7e7">802.1Q</div>
<div class="txt" style="left:290px;top:1437.65px;font-size:12.7px;line-height:12.7px;color:#a9b8b9;font-weight:400;">#2</div>
<svg style="left:320px;top:1435.9px" width="13" height="15" viewBox="0 0 13 15" fill="none" stroke="#a9b8b9" stroke-width="1.15" stroke-linecap="round" stroke-linejoin="round"><circle cx="6.5" cy="4" r="3.3"/><path d="M0.7 14.3 C0.7 10.2 3.3 7.9 6.5 7.9 C9.7 7.9 12.3 10.2 12.3 14.3"/></svg>
<div class="txt" style="left:340.5px;top:1437.65px;font-size:12.7px;line-height:12.7px;color:#a9b8b9;font-weight:400;">admin</div>
<svg style="left:387px;top:1436.2px" width="17.8" height="14" viewBox="0 0 19 15" fill="none" stroke="#a9b8b9" stroke-width="1.2" stroke-linecap="round" stroke-linejoin="round"><circle cx="6" cy="4.4" r="3.1"/><path d="M0.6 14.4 C0.6 10.6 3 8.2 6 8.2 C9 8.2 11.4 10.6 11.4 14.4"/><circle cx="13.8" cy="3.6" r="2.8"/><path d="M10.4 8.4 C11.2 7.6 12.4 7.1 13.8 7.1 C16.4 7.1 18.4 9.4 18.4 12"/></svg>
<div class="txt" style="left:411.5px;top:1437.65px;font-size:12.7px;line-height:12.7px;color:#a9b8b9;font-weight:400;">oneadmin</div>
<svg style="left:480px;top:1435.4px" width="17" height="17" viewBox="0 0 17 17" fill="none" stroke="#a9b8b9" stroke-width="1.15" stroke-linecap="round" stroke-linejoin="round"><rect x="0.6" y="0.6" width="15.8" height="7" rx="1.5"/><rect x="0.6" y="9.4" width="15.8" height="7" rx="1.5"/><path d="M3.4 4.1 H3.9 M3.4 12.9 H3.9" stroke-width="1"/></svg>
<div class="txt" style="left:503px;top:1437.65px;font-size:12.7px;line-height:12.7px;color:#a9b8b9;font-weight:400;">1</div>
<div class="txt" style="right:45px;top:1410.73px;font-size:14.5px;line-height:14.5px;color:#dfe7e7;font-weight:400;text-align:right;letter-spacing:0px">0 / 100 (0%)</div>
<div class="a" style="left:949px;top:1430px;width:219px;height:8px;border-radius:4px;background:#474747;overflow:hidden"><div style="width:0.00px;height:8px;border-radius:4px;background:#12a8bd"></div></div>
<div class="a" style="left:275px;top:1483px;width:908px;height:73px;border:1px solid #1f4349;border-radius:9px;background:#022a33"></div>
<div class="a" style="left:289px;top:1503px;width:12px;height:12px;border-radius:50%;background:#4eae52"></div>
<div class="txt" style="left:307px;top:1500.03px;font-size:16.5px;line-height:16.5px;color:#e0e8e8;font-weight:400;letter-spacing:0px">VLAN-2010</div>
<div class="a" style="left:397px;top:1498.5px;width:54px;height:22px;border-radius:5px;background:#2f4345"></div>
<div class="txt" style="left:397px;top:1498.5px;width:54px;height:22px;text-align:center;font-size:11.5px;line-height:22px;color:#dfe7e7">802.1Q</div>
<div class="txt" style="left:289px;top:1529.15px;font-size:12.7px;line-height:12.7px;color:#a9b8b9;font-weight:400;">#1</div>
<svg style="left:317px;top:1527.4px" width="13" height="15" viewBox="0 0 13 15" fill="none" stroke="#a9b8b9" stroke-width="1.15" stroke-linecap="round" stroke-linejoin="round"><circle cx="6.5" cy="4" r="3.3"/><path d="M0.7 14.3 C0.7 10.2 3.3 7.9 6.5 7.9 C9.7 7.9 12.3 10.2 12.3 14.3"/></svg>
<div class="txt" style="left:338px;top:1529.15px;font-size:12.7px;line-height:12.7px;color:#a9b8b9;font-weight:400;">admin</div>
<svg style="left:384px;top:1527.7px" width="17.8" height="14" viewBox="0 0 19 15" fill="none" stroke="#a9b8b9" stroke-width="1.2" stroke-linecap="round" stroke-linejoin="round"><circle cx="6" cy="4.4" r="3.1"/><path d="M0.6 14.4 C0.6 10.6 3 8.2 6 8.2 C9 8.2 11.4 10.6 11.4 14.4"/><circle cx="13.8" cy="3.6" r="2.8"/><path d="M10.4 8.4 C11.2 7.6 12.4 7.1 13.8 7.1 C16.4 7.1 18.4 9.4 18.4 12"/></svg>
<div class="txt" style="left:408.5px;top:1529.15px;font-size:12.7px;line-height:12.7px;color:#a9b8b9;font-weight:400;">oneadmin</div>
<svg style="left:477px;top:1526.9px" width="17" height="17" viewBox="0 0 17 17" fill="none" stroke="#a9b8b9" stroke-width="1.15" stroke-linecap="round" stroke-linejoin="round"><rect x="0.6" y="0.6" width="15.8" height="7" rx="1.5"/><rect x="0.6" y="9.4" width="15.8" height="7" rx="1.5"/><path d="M3.4 4.1 H3.9 M3.4 12.9 H3.9" stroke-width="1"/></svg>
<div class="txt" style="left:500px;top:1529.15px;font-size:12.7px;line-height:12.7px;color:#a9b8b9;font-weight:400;">1</div>
<div class="txt" style="right:44px;top:1501.73px;font-size:14.5px;line-height:14.5px;color:#dfe7e7;font-weight:400;text-align:right;letter-spacing:0px">0 / 100 (0%)</div>
<div class="a" style="left:949px;top:1521px;width:220px;height:8px;border-radius:4px;background:#474747;overflow:hidden"><div style="width:0.00px;height:8px;border-radius:4px;background:#12a8bd"></div></div>
</body></html>
